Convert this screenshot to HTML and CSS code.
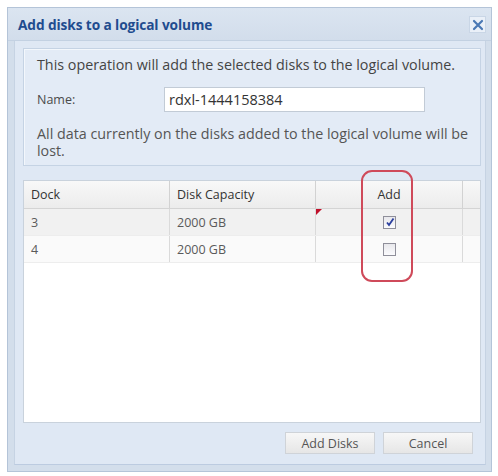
FILE: index.html
```html
<!DOCTYPE html>
<html>
<head>
<meta charset="utf-8">
<link rel="stylesheet" href="styles.css">
</head>
<body>
<div class="window">
  <div class="titlebar">
    <span class="title">Add disks to a logical volume</span>
    <span class="close"><svg width="12" height="12" viewBox="0 0 12 12"><path d="M2 2 L10 10 M10 2 L2 10" stroke="#4a78b4" stroke-width="2.2" stroke-linecap="round"/></svg></span>
  </div>
  <div class="body">
    <div class="panel">
      <p class="intro">This operation will add the selected disks to the logical volume.</p>
      <div class="name-row">
        <span class="label">Name:</span>
        <span class="input">rdxl-1444158384</span>
      </div>
      <p class="warn">All data currently on the disks added to the logical volume will be lost.</p>
    </div>
    <div class="grid">
      <div class="row head">
        <div class="c c1">Dock</div>
        <div class="c c2">Disk Capacity</div>
        <div class="c c3 center">Add</div>
        <div class="c c4"></div>
      </div>
      <div class="row r1">
        <div class="c c1">3</div>
        <div class="c c2">2000 GB</div>
        <div class="c c3 center"><span class="dirty"></span><span class="cb checked"><svg width="10" height="10" viewBox="0 0 10 10"><path d="M2 5.5 L4 8 L8.5 1.5" stroke="#2b3f9e" stroke-width="1.8" fill="none"/></svg></span></div>
        <div class="c c4"></div>
      </div>
      <div class="row r2">
        <div class="c c1">4</div>
        <div class="c c2">2000 GB</div>
        <div class="c c3 center"><span class="cb"></span></div>
        <div class="c c4"></div>
      </div>
      <div class="highlight"></div>
    </div>
    <div class="buttons">
      <span class="btn">Add Disks</span>
      <span class="btn">Cancel</span>
    </div>
  </div>
</div>
</body>
</html>
```
FILE: styles.css
```css
html, body {
  margin: 0;
  padding: 0;
  background: #ffffff;
}
body {
  font-family: "Open Sans", "DejaVu Sans", sans-serif;
  font-size: 12px;
  color: #444;
}
.window {
  margin: 7px 0 0 7px;
  width: 485px;
  height: 465px;
  box-sizing: border-box;
  border: 1px solid #b4c4d8;
  background: #d3deeb;
  display: flex;
  flex-direction: column;
}
.titlebar {
  height: 32px;
  display: flex;
  align-items: center;
  justify-content: space-between;
  padding: 0 5px 0 10px;
  background: linear-gradient(#dbe5f1, #d2ddeb);
  border-bottom: 1px solid #c3d1e2;
}
.title {
  font-weight: bold;
  font-size: 13.7px;
  color: #1f4c8f;
  letter-spacing: -0.1px;
}
.close {
  width: 15px;
  height: 15px;
  border: 1px solid #c9d6e6;
  background: #eaf0f8;
  display: flex;
  align-items: center;
  justify-content: center;
  margin-top: 1px;
}
.body {
  flex: 1;
  margin: 0 5px 6px 6px;
  background: #dfe8f4;
  border-left: 1px solid #c6d3e3;
  border-right: 1px solid #c6d3e3;
  border-bottom: 1px solid #bccbe0;
  padding: 7px 4px 0 8px;
  display: flex;
  flex-direction: column;
}
.panel {
  height: 118px;
  box-sizing: border-box;
  border: 1px solid #c5d3e4;
  box-shadow: inset 1px 1px 0 #f3f7fc;
  background: #e3ebf6;
  padding: 5px 6px 0 13px;
}
.panel p {
  margin: 0;
  font-size: 14.3px;
  line-height: 17px;
  color: #444;
}
.intro {
  padding-top: 2px;
}
.name-row {
  display: flex;
  align-items: center;
  margin-top: 14px;
}
.label {
  width: 127px;
  font-size: 12.5px;
  color: #4a4a4a;
}
.input {
  width: 261px;
  height: 25px;
  box-sizing: border-box;
  border: 1px solid #c2cbd6;
  background: #ffffff;
  padding: 0 4px;
  line-height: 23px;
  font-size: 14.5px;
  color: #333;
}
.warn {
  margin-top: 13px !important;
  color: #555 !important;
}
.grid {
  margin-top: 14px;
  height: 243px;
  box-sizing: border-box;
  border: 1px solid #c9d2dc;
  background: #ffffff;
  position: relative;
}
.row {
  display: flex;
  height: 26px;
}
.row.head {
  height: 27px;
  background: linear-gradient(#f8f8f8, #ececec);
  border-bottom: 1px solid #d4d4d4;
}
.row.r1 {
  background: #f1f1f1;
  border-bottom: 1px solid #ededed;
}
.row.r2 {
  background: #fafafa;
  border-bottom: 1px solid #ededed;
}
.c {
  box-sizing: border-box;
  display: flex;
  align-items: center;
  padding-left: 7px;
  border-right: 1px solid #dadada;
  font-size: 12.5px;
  color: #5a5a5a;
  position: relative;
}
.head .c {
  color: #333;
  font-size: 12.5px;
  border-right-color: #d2d2d2;
}
.c1 { width: 146px; }
.c2 { width: 146px; }
.c3 { width: 147px; }
.c4 { flex: 1; border-right: none; }
.center {
  justify-content: center;
  padding-left: 0;
}
.cb {
  width: 13px;
  height: 13px;
  box-sizing: border-box;
  border: 1px solid #8f8f9a;
  background: linear-gradient(#e8e8ec, #fbfbfd);
  display: flex;
  align-items: center;
  justify-content: center;
  margin-left: 1px;
}
.dirty {
  position: absolute;
  left: 0;
  top: 0;
  width: 0;
  height: 0;
  border-top: 6px solid #c0102a;
  border-right: 6px solid transparent;
}
.highlight {
  position: absolute;
  left: 337px;
  top: -11px;
  width: 52px;
  height: 112px;
  box-sizing: border-box;
  border: 2px solid #cf4a5a;
  border-radius: 11px;
}
.buttons {
  display: flex;
  justify-content: flex-end;
  gap: 8px;
  margin-top: 9px;
  padding-right: 8px;
}
.btn {
  width: 90px;
  height: 22px;
  box-sizing: border-box;
  border: 1px solid #cfd3d8;
  background: linear-gradient(#f7f7f7, #e6e6e6);
  display: flex;
  align-items: center;
  justify-content: center;
  font-size: 12.5px;
  color: #555;
}
```
